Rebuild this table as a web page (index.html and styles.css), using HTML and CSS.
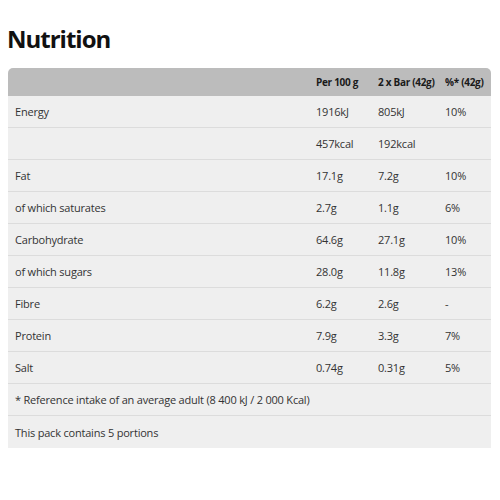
FILE: index.html
```html
<!DOCTYPE html>
<html>
<head>
<meta charset="utf-8">
<link rel="stylesheet" href="styles.css">
</head>
<body>
<h1 class="title">Nutrition</h1>
<table class="nutri">
  <thead>
    <tr><th class="label"></th><th>Per 100 g</th><th>2 x Bar (42g)</th><th>%* (42g)</th></tr>
  </thead>
  <tbody>
    <tr><td class="label">Energy</td><td>1916kJ</td><td>805kJ</td><td>10%</td></tr>
    <tr><td class="label"></td><td>457kcal</td><td>192kcal</td><td></td></tr>
    <tr><td class="label">Fat</td><td>17.1g</td><td>7.2g</td><td>10%</td></tr>
    <tr><td class="label">of which saturates</td><td>2.7g</td><td>1.1g</td><td>6%</td></tr>
    <tr><td class="label">Carbohydrate</td><td>64.6g</td><td>27.1g</td><td>10%</td></tr>
    <tr><td class="label">of which sugars</td><td>28.0g</td><td>11.8g</td><td>13%</td></tr>
    <tr><td class="label">Fibre</td><td>6.2g</td><td>2.6g</td><td>-</td></tr>
    <tr><td class="label">Protein</td><td>7.9g</td><td>3.3g</td><td>7%</td></tr>
    <tr><td class="label">Salt</td><td>0.74g</td><td>0.31g</td><td>5%</td></tr>
    <tr><td class="label" colspan="4">* Reference intake of an average adult (8 400 kJ / 2 000 Kcal)</td></tr>
    <tr class="last"><td class="label" colspan="4">This pack contains 5 portions</td></tr>
  </tbody>
</table>
</body>
</html>
```
FILE: styles.css
```css
html, body { margin: 0; padding: 0; background: #fff; }
body {
  font-family: "Open Sans", "Liberation Sans", sans-serif;
  color: #222;
}
.title {
  margin: 0;
  padding: 27px 0 0 7px;
  height: 41px;
  box-sizing: border-box;
  font-size: 24px;
  line-height: 24px;
  font-weight: 700;
  color: #111;
  letter-spacing: -1px;
}
.nutri {
  margin: 27px 0 0 8px;
  width: 483px;
  border-collapse: separate;
  border-spacing: 0;
  font-size: 11px;
  table-layout: fixed;
}
.nutri th {
  background: #bcbcbc;
  height: 28px;
  padding: 0;
  text-align: left;
  font-weight: 700;
  font-size: 10px;
  letter-spacing: -0.3px;
  color: #1a1a1a;
  white-space: nowrap;
}
.nutri th:first-child { border-top-left-radius: 5px; }
.nutri th:last-child { border-top-right-radius: 5px; }
.nutri td {
  background: #efefef;
  height: 31px;
  padding: 0;
  border-bottom: 1px solid #dcdcdc;
  color: #333;
  white-space: nowrap;
  letter-spacing: -0.2px;
}
.nutri tr.last td { border-bottom: none; height: 32px; }
.nutri .label { padding-left: 7px; width: 301px; }
.nutri th:nth-child(2), .nutri td:nth-child(2) { width: 62px; }
.nutri th:nth-child(3), .nutri td:nth-child(3) { width: 67px; }
```
